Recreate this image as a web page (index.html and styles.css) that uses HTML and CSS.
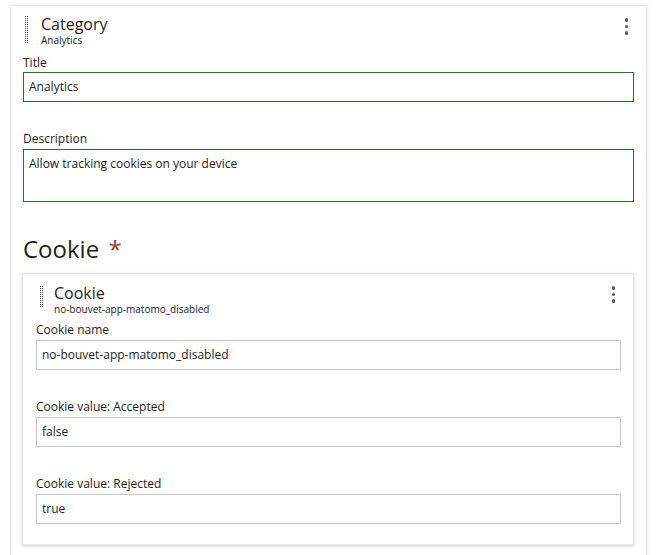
FILE: index.html
```html
<!DOCTYPE html>
<html>
<head>
<meta charset="utf-8">
<link rel="stylesheet" href="styles.css">
</head>
<body>
<div class="card outer">
  <div class="card-head">
    <svg class="handle" width="3" height="27" viewBox="0 0 3 27"><defs><pattern id="dots1" width="2" height="2" patternUnits="userSpaceOnUse"><rect width="1" height="1" fill="#555"/></pattern></defs><rect width="3" height="27" fill="url(#dots1)"/></svg>
    <div class="head-text">
      <div class="head-title">Category</div>
      <div class="head-sub">Analytics</div>
    </div>
    <span class="kebab"><i></i><i></i><i></i></span>
  </div>
  <div class="field">
    <label class="label">Title</label>
    <div class="input valid">Analytics</div>
  </div>
  <div class="field">
    <label class="label">Description</label>
    <div class="input valid area">Allow tracking cookies on your device</div>
  </div>
  <h2 class="section">Cookie <span class="req">*</span></h2>
  <div class="card inner">
    <div class="card-head">
      <svg class="handle" width="3" height="21" viewBox="0 0 3 21"><defs><pattern id="dots2" width="2" height="2" patternUnits="userSpaceOnUse"><rect width="1" height="1" fill="#555"/></pattern></defs><rect width="3" height="21" fill="url(#dots2)"/></svg>
      <div class="head-text">
        <div class="head-title">Cookie</div>
        <div class="head-sub">no-bouvet-app-matomo_disabled</div>
      </div>
      <span class="kebab"><i></i><i></i><i></i></span>
    </div>
    <div class="field">
      <label class="label">Cookie name</label>
      <div class="input">no-bouvet-app-matomo_disabled</div>
    </div>
    <div class="field">
      <label class="label">Cookie value: Accepted</label>
      <div class="input">false</div>
    </div>
    <div class="field last">
      <label class="label">Cookie value: Rejected</label>
      <div class="input">true</div>
    </div>
  </div>
</div>
</body>
</html>
```
FILE: styles.css
```css
html, body {
  margin: 0;
  padding: 0;
  background: #fff;
  font-family: "Open Sans", "Liberation Sans", sans-serif;
  color: #1e1e1e;
}
.card {
  background: #fff;
  box-sizing: border-box;
}
.outer {
  margin: 5px 0 0 10px;
  width: 637px;
  min-height: 560px;
  border: 1px solid #e8e8e8;
  border-bottom: none;
  box-shadow: 1px 0 2px rgba(0,0,0,0.08);
  padding: 8px 12px 0 12px;
}
.inner {
  margin-left: -1px;
  width: 612px;
  border: 1px solid #e6e6e6;
  box-shadow: 0 1px 3px rgba(0,0,0,0.18);
  padding: 9px 12px 20px 13px;
}
.card-head {
  display: flex;
  align-items: flex-start;
  margin-bottom: 9px;
}
.inner .card-head {
  margin-bottom: 7px;
}
.handle {
  display: block;
  flex: none;
  margin: 2px 13px 0 2px;
}
.inner .handle {
  margin: 3px 11px 0 4px;
}
.head-text {
  flex: 1;
}
.head-title {
  font-size: 16px;
  line-height: 20px;
  color: #1e1e1e;
}
.head-sub {
  font-size: 10px;
  line-height: 12px;
  color: #222;
}
.kebab {
  display: flex;
  flex-direction: column;
  gap: 3.2px;
  margin: 4px 6px 0 0;
}
.inner .kebab {
  margin-top: 3px;
}
.kebab i {
  display: block;
  width: 3.5px;
  height: 3.5px;
  border-radius: 50%;
  background: #555;
}
.field {
  margin-bottom: 29px;
}
.inner .field {
  margin-bottom: 29px;
}
.inner .field.last {
  margin-bottom: 0;
}
.label {
  display: block;
  font-size: 12px;
  line-height: 16px;
  margin-top: 3px;
  margin-bottom: 1px;
}
.inner .label {
  margin-bottom: 2px;
}
.input {
  box-sizing: border-box;
  height: 30px;
  border: 1px solid #c8c8c8;
  font-size: 12px;
  line-height: 16px;
  padding: 6px 5px;
  color: #1e1e1e;
}
.input.valid {
  border-color: #1d7b2c;
}
.input.area {
  height: 53px;
  padding-top: 6px;
  margin-top: 2px;
}
.section {
  font-size: 24px;
  font-weight: 400;
  line-height: 32px;
  margin: 31px 0 8px 0;
}
.req {
  color: #a33535;
  margin-left: 3px;
}
```
